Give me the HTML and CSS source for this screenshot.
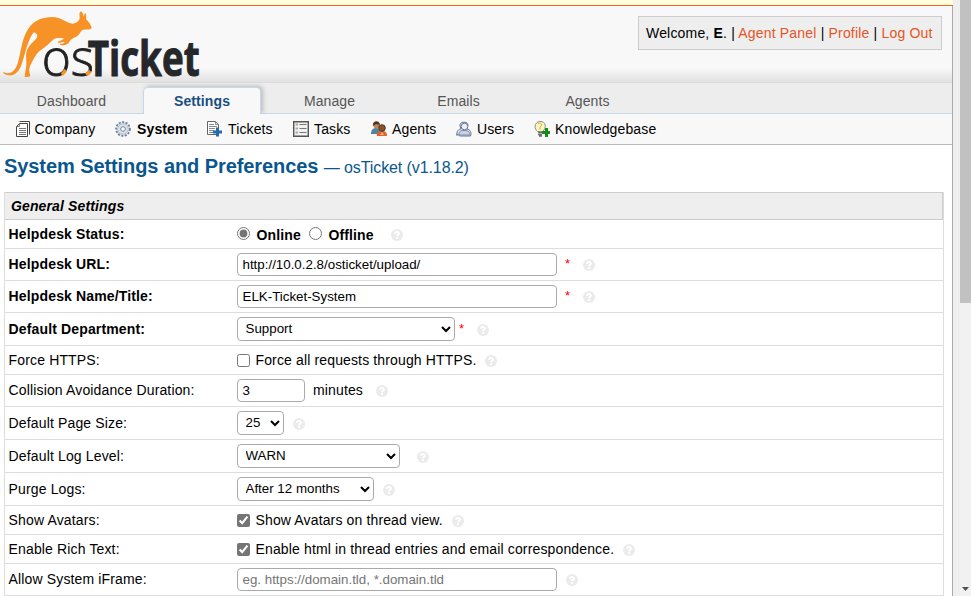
FILE: index.html
```html
<!DOCTYPE html>
<html lang="en">
<head>
<meta charset="utf-8">
<title>osTicket</title>
<link rel="stylesheet" href="styles.css">
</head>
<body>
<svg width="0" height="0" class="defs"><defs>
<symbol id="q" viewBox="0 0 12 12"><circle cx="6" cy="6" r="6" fill="#ebebeb"/><path d="M4 4.700C4 2.500 8 2.500 8 4.600C8 5.800 6.100 5.800 6.100 7.200M6.100 8.100V9.900" stroke="#fff" stroke-width="1.900" fill="none"/></symbol>
</defs></svg>
<div class="page">
<main class="container">
<div class="notice"></div>
<header>
<svg class="logo" viewBox="0 0 630 231" role="img">
<path fill="#f79226" d="M9 198C34 209 48 192 55 165C65 128 66 98 84 70C100 43 128 33 158 33C180 33 193 46 211 52C222 55 232 50 237 42C242 37 235 21 241 17C246 13 250 24 251 32L255 20C259 24 260 31 258 40C265 45 274 58 275 66C270 73 256 69 248 72C240 76 239 88 226 94C213 99 211 103 206 111C199 119 188 118 181 117L180 113C187 113 192 112 194 107L175 111L174 107C182 105 188 102 192 97C179 96 170 95 162 99C148 112 138 122 122 133C108 143 102 158 95 170C88 181 85 193 91 208C91 215 79 213 74 212C74 202 79 186 79 173C80 158 75 146 82 130C91 112 105 106 111 94C114 87 107 78 100 80C85 99 76 139 67 169C59 198 43 211 26 208C18 207 10 204 9 198Z"/>
<text class="logo-os" x="125" y="209" textLength="157" lengthAdjust="spacingAndGlyphs">os</text>
<text class="logo-ticket" x="263" y="209" textLength="336" lengthAdjust="spacingAndGlyphs">Ticket</text>
<path d="M186 206L197 192M259 207L271 195" stroke="#f79226" stroke-width="10"/>
</svg>
<div class="welcome">Welcome, <b>E</b>. | <a>Agent Panel</a> | <a>Profile</a> | <a>Log Out</a></div>
</header>
<nav class="tabs"><a>Dashboard</a><a class="active">Settings</a><a>Manage</a><a>Emails</a><a>Agents</a></nav>
<nav class="sub">
<a class="s1"><svg viewBox="0 0 16 16"><path d="M4.500 .5H14.500V13.500" fill="#fff" stroke="#444"/><path d="M1.500 5.500L4.500 2.500H12.500V15.500H1.500Z" fill="#fff" stroke="#444"/><path d="M4.500 3V5.500H2M4 7.500H11M4 9.500H11M4 11.500H11M4 13.500H11" stroke="#777" fill="none"/></svg>Company</a>
<a class="s2"><svg viewBox="0 0 16 16"><circle cx="8" cy="8" r="6.900" fill="#d9e0ea" stroke="#6c7f9c" stroke-width="1.800" stroke-dasharray="2 1.500"/><circle cx="8" cy="8" r="5.200" fill="#dce1e8" stroke="#b8c1cf"/><circle cx="8" cy="8" r="2.300" fill="#fff" stroke="#71839f"/></svg><b>System</b></a>
<a class="s3"><svg viewBox="0 0 16 16"><path d="M1.500 .5H9.500L12.500 3.500V13.500H1.500Z" fill="#fff" stroke="#666"/><path d="M9.500 1V3.500H12M3 3.500H8M3 5.500H11M3 7.500H9M3 9.500H8M3 11.500H7" stroke="#888" fill="none"/><path d="M10 6.500H13V9.500H16V12.500H13V15.500H10V12.500H7V9.500H10Z" fill="#246aaa"/></svg>Tickets</a>
<a class="s4"><svg viewBox="0 0 16 16"><path d="M.7.700H15.300V15.300H.7Z" fill="#f2f2f2" stroke="#555" stroke-width="1.400"/><path d="M2.500 3.500H5M2.500 7.500H5M2.500 11.500H5" stroke="#aaa" stroke-width="2"/><path d="M6.500 3.500H13.500M6.500 7.500H13.500M6.500 11.500H13.500" stroke="#777"/></svg>Tasks</a>
<a class="s5"><svg viewBox="0 0 16 16"><path d="M0 13C0 9 2 7 5 7S9 9 9 13Z" fill="#4a88a5"/><circle cx="5.500" cy="4.500" r="3" fill="#bd8656"/><path d="M2 5C1-1 9-1 9 4L5 3Z" fill="#51341f"/><path d="M6 15C5 11 8 10 11 10S16 11 16 15Z" fill="#e56129"/><circle cx="11" cy="7" r="3.300" fill="#885430" stroke="#4d3629"/><path d="M11 11L9 14H13Z" fill="#ffb68d"/></svg>Agents</a>
<a class="s6"><svg viewBox="0 0 16 16"><path d="M1 14.500C0 10 3 8 5 8L4 5C3 0 12 0 12 4L11 8C14 8 16 12 14.500 15H4L1 13Z" fill="#dbe1ec" stroke="#65789b"/><circle cx="8.500" cy="5.500" r="3.300" fill="#edf0f5" stroke="#65789b"/><path d="M3 14C3 10 5 9.500 8 9.500S14 10 14 14Z" fill="#cbd3e0" stroke="#7889a8"/></svg>Users</a>
<a class="s7"><svg viewBox="0 0 16 16"><path d="M3.500 10.500C0 8 0 1 6 .5C12 0 13 7 8.500 10.500Z" fill="#fff7bd" stroke="#81909c"/><path d="M4 3C6 1 9 3 7 5L6 6V9" fill="none" stroke="#e5b13d"/><path d="M4 11.500H9M4 13.500H8M5 15H8" stroke="#6f6f6f" stroke-width="1.400"/><path d="M11 7H14V10H16V13H14V16H11V13H8V10H11Z" fill="#178b18"/></svg>Knowledgebase</a>
</nav>
<h2>System Settings and Preferences <small>— osTicket (v1.18.2)</small></h2>
<form class="settings">
<div class="head">General Settings</div>
<div class="row r28 bold"><label>Helpdesk Status:</label><input type="radio" name="status" checked><b class="on">Online</b><input type="radio" name="status" class="second"><b>Offline</b><svg class="help h17"><use href="#q"/></svg></div>
<div class="row r31 bold"><label>Helpdesk URL:</label><input class="wide" value="http://10.0.2.8/osticket/upload/"><i>*</i><svg class="help h13"><use href="#q"/></svg></div>
<div class="row r31 bold"><label>Helpdesk Name/Title:</label><input class="wide" value="ELK-Ticket-System"><i>*</i><svg class="help h13"><use href="#q"/></svg></div>
<div class="row r32 bold"><label>Default Department:</label><select class="dept"><option>Support</option></select><i class="near">*</i><svg class="help h13"><use href="#q"/></svg></div>
<div class="row r28"><label>Force HTTPS:</label><input type="checkbox"><span>Force all requests through HTTPS.</span><svg class="help h9"><use href="#q"/></svg></div>
<div class="row r31"><label>Collision Avoidance Duration:</label><input class="num" value="3"><span>minutes</span><svg class="help h13"><use href="#q"/></svg></div>
<div class="row r32"><label>Default Page Size:</label><select class="size"><option>25</option></select><svg class="help h9"><use href="#q"/></svg></div>
<div class="row r32"><label>Default Log Level:</label><select class="level"><option>WARN</option></select><svg class="help h17"><use href="#q"/></svg></div>
<div class="row r32"><label>Purge Logs:</label><select class="purge"><option>After 12 months</option></select><svg class="help h9"><use href="#q"/></svg></div>
<div class="row r28"><label>Show Avatars:</label><input type="checkbox" checked><span>Show Avatars on thread view.</span><svg class="help h9"><use href="#q"/></svg></div>
<div class="row r28"><label>Enable Rich Text:</label><input type="checkbox" checked><span>Enable html in thread entries and email correspondence.</span><svg class="help h9"><use href="#q"/></svg></div>
<div class="row r31"><label>Allow System iFrame:</label><input class="wide" placeholder="eg. https://domain.tld, *.domain.tld"><svg class="help h9"><use href="#q"/></svg></div>
</form>
</main>
<div class="gutter"></div>
<div class="scroll"><div class="thumb"></div><svg width="7" height="4"><path d="M0 0H7L3.500 4Z" fill="#505050"/></svg></div>
</div>
</body>
</html>
```
FILE: styles.css
```css
* { box-sizing: border-box; }
body { margin: 0; overflow: hidden; background: #eee; color: #000; font: 14px/18px "Liberation Sans", Arial, sans-serif; }
.defs { display: none; }
.page { display: flex; height: 596px; }
.container { width: 953px; flex: none; background: #fff; border-right: 1px solid #aaa; }
.notice { height: 6px; background: #ffd; border-bottom: 1px solid #f26522; margin-right: -1px; }
header { height: 77px; display: flex; justify-content: space-between; align-items: flex-start; background: linear-gradient(#f8f8f8 82%, #e1e1e1); border-bottom: 1px solid #ddd; }
.logo { width: 210px; height: 77px; overflow: visible; }
.logo-os { font: 300 150px "Open Sans"; fill: #222; stroke: #222; stroke-width: 2.5px; }
.logo-ticket { font: 700 144px "Open Sans"; fill: #25272a; stroke: #25272a; stroke-width: 3px; }
.welcome { margin: 10px 10px 0 0; width: 304px; height: 34px; padding: 7px; border: 1px solid #ccc; background: #eee; white-space: nowrap; letter-spacing: .18px; }
.welcome a { color: #e65524; }
.tabs { position: relative; height: 31px; display: flex; background: #ededed; border-bottom: 1px solid #c5d9e9; color: #555; }
.tabs a { width: 129px; padding-top: 9px; text-align: center; letter-spacing: .1px; }
.tabs a:first-child { width: 143px; }
.tabs .active { width: 118px; height: 27px; margin: 4px 10px 0 0; padding-top: 4px; border: 1px solid #c5d9e9; border-bottom: 0; border-radius: 5px 5px 0 0; background: #f8f8f8; color: #184e81; font-weight: bold; box-shadow: 2px -1px 4px #bbb; }
.tabs .active + a { margin-left: -6px; }
.sub { position: relative; display: flex; height: 31px; background: #f8f8f8; border-bottom: 1px solid #bbb; padding-left: 15px; }
.sub a { display: flex; align-items: center; flex: none; white-space: nowrap; letter-spacing: .13px; }
.sub svg { width: 16px; height: 16px; margin-right: 4px; }
.s1 { width: 100px; }
.s1 svg { margin-right: 3.5px; }
.s2 { width: 91px; }
.s3 { width: 87px; }
.s4 { width: 78px; }
.s5 { width: 85px; }
.s6 { width: 78px; }
.s2 b { margin-left: 2px; }
.s3 svg { margin-right: 6px; }
.s4 svg, .s5 svg, .s6 svg, .s7 svg { margin-right: 5px; }
h2 { height: 47px; margin: 0; padding: 9px 4px 0; color: #0a568e; font-size: 20px; line-height: 24px; letter-spacing: -.08px; }
h2 small { font-size: 16px; font-weight: normal; letter-spacing: -.1px; }
.settings { width: 940px; margin-left: 4px; border: solid #ddd; border-width: 0 1px; }
.head { height: 28px; padding: 4px 6px; border: 1px solid #ccc; border-left-width: 0; background: #eee; font-weight: bold; font-style: italic; letter-spacing: .13px; }
.row { height: 32px; display: flex; align-items: center; border-bottom: 1px solid #ddd; padding-left: 4px; letter-spacing: .14px; white-space: nowrap; }
.r32 { height: 33px; }
.r28 { height: 29px; }
.row label { width: 228px; flex: none; margin-left: -.4px; margin-right: .4px; }
.r31 label, .r31 span { margin-top: -2px; }
.bold label { font-weight: bold; }
.row b { margin-top: 2px; }
input, select { margin: 0; font: 13.333px "Liberation Sans", Arial, sans-serif; letter-spacing: 0; accent-color: #757575; }
input[type=radio], input[type=checkbox] { width: 13px; height: 13px; flex: none; }
input[type=radio] { margin-right: 6.5px; margin-top: -1px; }
input[type=checkbox] { margin-right: 5.5px; }
.row .second { margin-left: 8px; }
.wide, .num { width: 320px; height: 23px; padding: 1px 4.5px 2px; border: 1px solid #aaa; border-radius: 4px; }
.num { width: 68px; margin-right: 8px; }
select { height: 24px; padding: 0 3.5px 1px; border: 1px solid #aaa; border-radius: 4px; background-color: #fff; }
.dept { width: 218px; }
.size { width: 47px; }
.level { width: 163px; }
.purge { width: 137px; }
i { font: 13px/12px "Liberation Sans"; color: red; width: 5px; margin-left: 8px; margin-top: -1px; }
.near { margin-left: 4px; }
.help { width: 12px; height: 12px; flex: none; margin-top: 2px; }
.r31 .help { margin-top: 1px; }
.h17 { margin-left: 17px; }
.h13 { margin-left: 13px; }
.h9 { margin-left: 9px; }
.gutter { width: 7px; background: #efefef; }
.scroll { width: 11px; background: #f1f1f1; display: flex; flex-direction: column; justify-content: space-between; align-items: center; padding-bottom: 5px; }
.thumb { width: 11px; height: 303px; background: #c1c1c1; }
```
